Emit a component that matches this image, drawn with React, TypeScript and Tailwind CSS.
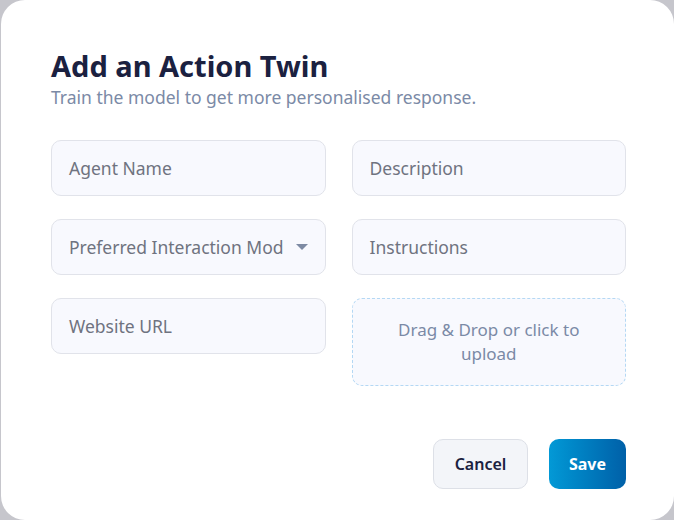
const fieldClass =
  "h-14 rounded-[10px] border border-[#e1e3ea] bg-[#f8f9fe] px-[17px] flex items-center text-[17.5px] text-[#6f7380]";

function Field({ label }: { label: string }) {
  return <div className={fieldClass}>{label}</div>;
}

export default function App() {
  return (
    <div
      className="h-[520px] w-[674px] overflow-hidden bg-[#c6c6cc] pl-px"
      style={{ fontFamily: '"Noto Sans", "Open Sans", sans-serif' }}
    >
      <div className="flex h-[520px] w-[673px] flex-col rounded-[24px] bg-white pl-[50px] pr-[48px] pt-[46px]">
        <h1 className="text-[29px] font-bold leading-[40px] text-[#1b2140]">Add an Action Twin</h1>
        <p className="mt-[-1px] text-[17.5px] leading-6 text-[#7b8aa6]">
          Train the model to get more personalised response.
        </p>

        <div className="mt-[31px] grid grid-cols-2 gap-x-[26px]">
          <div className="flex flex-col gap-[23px]">
            <Field label="Agent Name" />
            <div className={fieldClass + " justify-between text-[#1e2340]"}>
              <span className="overflow-hidden whitespace-nowrap">Preferred Interaction Mode</span>
              <svg width="12" height="7" viewBox="0 0 12 7" className="ml-3 shrink-0">
                <path d="M0 0h12L6 6z" fill="#7d8aa3" />
              </svg>
            </div>
            <Field label="Website URL" />
          </div>
          <div className="flex flex-col gap-[23px]">
            <Field label="Description" />
            <Field label="Instructions" />
            <div className="flex h-[88px] items-center justify-center rounded-[10px] border border-dashed border-[#b4d8f4] bg-[#f8f9fe] px-10 text-center text-[17px] leading-6 text-[#7b8aa6]">
              Drag &amp; Drop or click to upload
            </div>
          </div>
        </div>

        <div className="mt-[53px] flex justify-end gap-[21px]">
          <button className="h-[50px] w-[95px] rounded-[10px] border border-[#dde0e7] bg-[#f3f5f9] text-[16px] font-semibold text-[#1b2140]">
            Cancel
          </button>
          <button className="h-[50px] w-[77px] rounded-[10px] bg-gradient-to-r from-[#0399d6] to-[#0060a8] text-[16px] font-bold text-white">
            Save
          </button>
        </div>
      </div>
    </div>
  );
}
